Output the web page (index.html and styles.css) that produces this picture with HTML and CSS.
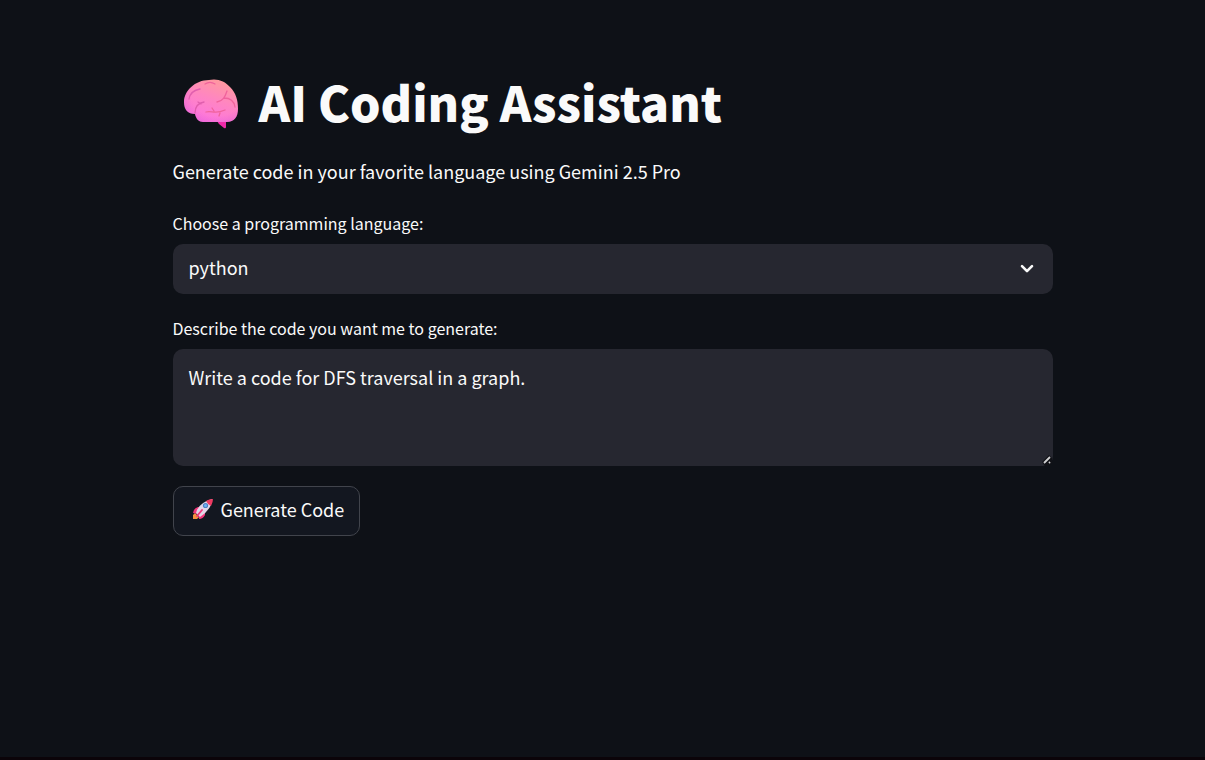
FILE: index.html
```html
<!DOCTYPE html>
<html lang="en">
<head>
<meta charset="utf-8">
<meta name="viewport" content="width=device-width, initial-scale=1">
<title>AI Coding Assistant</title>
<link rel="stylesheet" href="styles.css">
</head>
<body>
<main class="page">
  <h1 class="title">
    <svg class="brain" viewBox="0 0 56 52" aria-hidden="true">
      <defs>
        <linearGradient id="brainFill" x1="0.75" y1="0" x2="0.3" y2="1">
          <stop offset="0" stop-color="#ff9b9b"/>
          <stop offset="0.45" stop-color="#ff86c0"/>
          <stop offset="1" stop-color="#fd74e2"/>
        </linearGradient>
        <radialGradient id="brainShade" cx="0.6" cy="0.4" r="0.66">
          <stop offset="0.7" stop-color="#d94fd0" stop-opacity="0"/>
          <stop offset="1" stop-color="#c94fc8" stop-opacity="0.3"/>
        </radialGradient>
      </defs>
      <path d="M34 42h9v6q0 2-2 1l-5-4z" fill="#ee2aa8"/>
      <path d="M26 1C34-1 42 2 47 8c6 6 8 13 8 22 0 8-4 13-11 13H20c-4 0-7-3-8-8C5 35 1 31 1 23 1 12 12 1 26 1z" fill="url(#brainFill)"/>
      <path d="M26 1C34-1 42 2 47 8c6 6 8 13 8 22 0 8-4 13-11 13H20c-4 0-7-3-8-8C5 35 1 31 1 23 1 12 12 1 26 1z" fill="url(#brainShade)"/>
      <g fill="none" stroke-width="1.3" stroke-linecap="round" stroke-linejoin="round">
        <path stroke="#e05fae" d="M6 20c1-6 5-9 11-10M12 34c0-6 3-10 9-11M15 23l3 2"/>
        <path stroke="#f0639c" d="M22 5c3-2 7-2 10 0M34 23c6-1 8-5 10-11M41 19c6 0 10 3 11 9M23 33c6-2 8 3 19-2M29 29l2 3M37 34l-1 3"/>
      </g>
    </svg>
    <span class="title-text">AI Coding Assistant</span>
  </h1>
  <p class="intro">Generate code in your favorite language using Gemini 2.5 Pro</p>
  <form class="form">
    <div class="field">
      <label class="label" for="language">Choose a programming language:</label>
      <div class="select-wrap">
        <select class="control select" id="language">
          <option>python</option>
        </select>
        <svg class="chevron" viewBox="0 0 14 10" aria-hidden="true"><path d="M2 2.2l5 5 5-5"/></svg>
      </div>
    </div>
    <div class="field">
      <label class="label" for="prompt">Describe the code you want me to generate:</label>
      <div class="textarea-wrap">
        <textarea class="control textarea" id="prompt" spellcheck="false">Write a code for DFS traversal in a graph.</textarea>
        <svg class="grip" viewBox="0 0 12 12" aria-hidden="true">
          <path d="M1 8l7-7 3 3v5l-4 3H4z" fill="#111217"/>
          <path d="M3 9l6-6M8 9l1-1" stroke="#d0d0d2" stroke-width="1.8"/>
        </svg>
      </div>
    </div>
    <button class="button" type="button">
      <svg class="rocket" viewBox="0 0 22 22" aria-hidden="true">
        <path d="M1 21v-4l2-2 4 4-2 2z" fill="#f5923e"/>
        <path d="M6 9l5 0-5 7-5-1q0-4 5-6zM13 12v5q-2 4-6 4l-1-5z" fill="#f4387c"/>
        <path d="M4 15Q6 5 20 1q0 10-12 18z" fill="#e3d6e8"/>
        <path d="M14 3q3-2 7-2 0 3-2 7-3-1-5-5z" fill="#f03a62"/>
        <circle cx="13.500" cy="7.500" r="2.600" fill="#4d7fc4"/>
        <circle cx="13.500" cy="7.500" r="1.500" fill="#6eb4f3"/>
        <path d="M10 12l-5 6" stroke="#f4387c" stroke-width="1.800" stroke-linecap="round"/>
      </svg>
      <span>Generate Code</span>
    </button>
  </form>
</main>
</body>
</html>
```
FILE: styles.css
```css
* {
  box-sizing: border-box;
}

body {
  margin: 0;
  min-height: 100vh;
  padding: 69px 20px 20px 40px;
  background: #0e1117;
  border-bottom: 3px solid #0b0409;
  color: #fafafa;
  font-family: "Noto Sans CJK SC", "Noto Sans", sans-serif;
  font-size: 18px;
  line-height: 32px;
}

.page {
  max-width: 880px;
  margin: 0 auto;
}

.title {
  display: flex;
  align-items: center;
  gap: 20px;
  margin: 0;
  padding-left: 10px;
  font-size: 48px;
  font-weight: 900;
  line-height: 64px;
}

.title-text {
  padding-bottom: 8px;
}

.brain {
  flex: none;
  width: 56px;
  height: 52px;
}

.intro {
  margin: 14px 0 22px;
}

.form {
  display: flex;
  flex-direction: column;
  align-items: flex-start;
  gap: 20px;
}

.field {
  display: flex;
  flex-direction: column;
  gap: 7px;
  width: 100%;
}

.label {
  font-size: 16px;
  line-height: 28px;
}

.select-wrap,
.textarea-wrap {
  display: grid;
  align-items: center;
}

.control {
  grid-area: 1 / 1;
  width: 100%;
  border: 0;
  border-radius: 10px;
  background: #262730;
  color: #fafafa;
  font: inherit;
}

.select {
  height: 50px;
  padding: 0 16px 4px;
  appearance: none;
}

.chevron {
  grid-area: 1 / 1;
  justify-self: end;
  width: 14px;
  height: 10px;
  margin-right: 19px;
  fill: none;
  stroke: #fafafa;
  stroke-width: 2.6;
  stroke-linecap: round;
  stroke-linejoin: round;
  pointer-events: none;
}

.textarea {
  display: block;
  height: 117px;
  padding: 12px 16px;
  resize: vertical;
}

.textarea::-webkit-resizer {
  background: transparent;
}

.grip {
  grid-area: 1 / 1;
  place-self: end;
  width: 12px;
  height: 12px;
  pointer-events: none;
}

.button {
  display: flex;
  align-items: center;
  gap: 7px;
  height: 50px;
  padding: 0 15px 4px 18px;
  border: 1px solid #41444c;
  border-radius: 10px;
  background: #131720;
  color: #fafafa;
  font: inherit;
}

.rocket {
  width: 22px;
  height: 22px;
}
```
